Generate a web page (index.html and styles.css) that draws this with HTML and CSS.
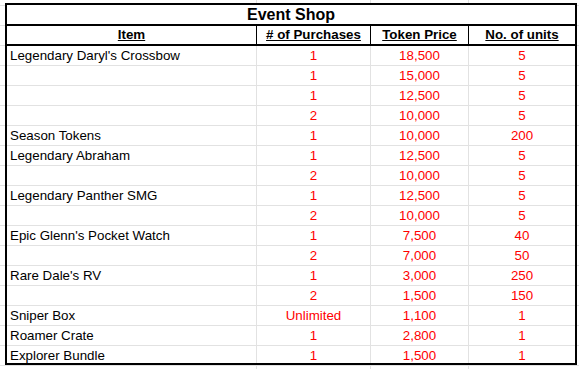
FILE: index.html
```html
<!DOCTYPE html>
<html lang="en">
<head>
<meta charset="utf-8">
<title>Event Shop</title>
<link rel="stylesheet" href="styles.css">
</head>
<body>
<div class="page">
  <div class="sheet">
    <div class="title">Event Shop</div>

    <div class="head">Item</div>
    <div class="head">#&nbsp;of Purchases</div>
    <div class="head">Token Price</div>
    <div class="head last">No. of units</div>

    <div class="cell item">Legendary Daryl's Crossbow</div><div class="cell num">1</div><div class="cell num">18,500</div><div class="cell num last">5</div>
    <div class="cell item"></div><div class="cell num">1</div><div class="cell num">15,000</div><div class="cell num last">5</div>
    <div class="cell item"></div><div class="cell num">1</div><div class="cell num">12,500</div><div class="cell num last">5</div>
    <div class="cell item"></div><div class="cell num">2</div><div class="cell num">10,000</div><div class="cell num last">5</div>
    <div class="cell item">Season Tokens</div><div class="cell num">1</div><div class="cell num">10,000</div><div class="cell num last">200</div>
    <div class="cell item">Legendary Abraham</div><div class="cell num">1</div><div class="cell num">12,500</div><div class="cell num last">5</div>
    <div class="cell item"></div><div class="cell num">2</div><div class="cell num">10,000</div><div class="cell num last">5</div>
    <div class="cell item">Legendary Panther SMG</div><div class="cell num">1</div><div class="cell num">12,500</div><div class="cell num last">5</div>
    <div class="cell item"></div><div class="cell num">2</div><div class="cell num">10,000</div><div class="cell num last">5</div>
    <div class="cell item">Epic Glenn's Pocket Watch</div><div class="cell num">1</div><div class="cell num">7,500</div><div class="cell num last">40</div>
    <div class="cell item"></div><div class="cell num">2</div><div class="cell num">7,000</div><div class="cell num last">50</div>
    <div class="cell item">Rare Dale's RV</div><div class="cell num">1</div><div class="cell num">3,000</div><div class="cell num last">250</div>
    <div class="cell item"></div><div class="cell num">2</div><div class="cell num">1,500</div><div class="cell num last">150</div>
    <div class="cell item">Sniper Box</div><div class="cell num">Unlimited</div><div class="cell num">1,100</div><div class="cell num last">1</div>
    <div class="cell item">Roamer Crate</div><div class="cell num">1</div><div class="cell num">2,800</div><div class="cell num last">1</div>
    <div class="cell item end">Explorer Bundle</div><div class="cell num end">1</div><div class="cell num end">1,500</div><div class="cell num last end">1</div>
  </div>
</div>
</body>
</html>
```

FILE: styles.css
```css
html, body {
  margin: 0;
  padding: 0;
  background: #fff;
}

.page {
  min-height: 100vh;
  box-sizing: border-box;
  padding: 3px 0 0 5px;
  font-family: "Liberation Sans", Arial, sans-serif;
  font-size: 13.333px;
  color: #000;
  background:
    linear-gradient(#e2e2e2, #e2e2e2) 256px 0 / 1px 100% no-repeat,
    linear-gradient(#e2e2e2, #e2e2e2) 370px 0 / 1px 100% no-repeat,
    linear-gradient(#e2e2e2, #e2e2e2) 468px 0 / 1px 100% no-repeat,
    repeating-linear-gradient(to bottom, transparent 0 5px, #e2e2e2 5px 6px, transparent 6px 20px),
    #fff;
}

.sheet {
  display: grid;
  grid-template-columns: 250px 114px 98px 106px;
  width: max-content;
  border: 2px solid #000;
  background: #fff;
}

.title {
  grid-column: 1 / -1;
  height: 21px;
  box-sizing: border-box;
  border-bottom: 2px solid #000;
  text-align: center;
  font-size: 16px;
  font-weight: bold;
  line-height: 19px;
}

.head {
  height: 20px;
  box-sizing: border-box;
  border-bottom: 2px solid #000;
  border-right: 1px solid #000;
  text-align: center;
  font-weight: bold;
  text-decoration: underline;
  line-height: 18px;
  white-space: nowrap;
}

.cell {
  height: 20px;
  box-sizing: border-box;
  border-bottom: 1px solid #e2e2e2;
  border-right: 1px solid #e2e2e2;
  line-height: 19px;
  white-space: nowrap;
}

.item {
  padding-left: 3px;
}

.num {
  text-align: center;
  color: #ff0000;
}

.last {
  border-right: none;
}

.end {
  height: 17px;
  border-bottom: none;
}
```
